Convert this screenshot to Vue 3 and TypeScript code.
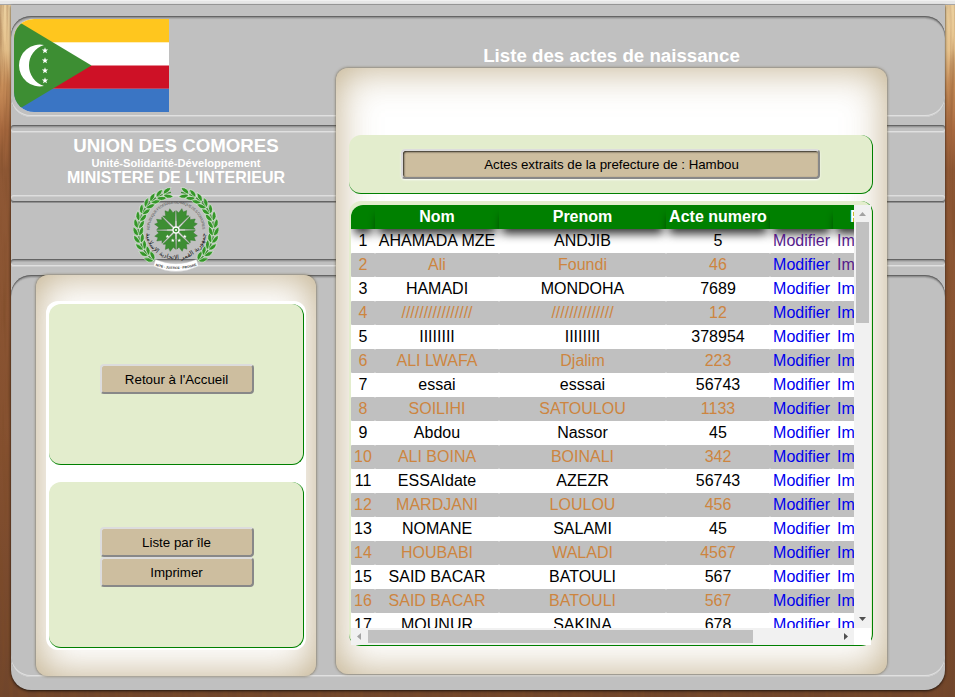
<script setup lang="ts">
interface Acte {
  nom: string
  prenom: string
  numero: string
  modifierVisited?: boolean
  imprimerVisited?: boolean
}

const actes: Acte[] = [
  { nom: 'AHAMADA MZE', prenom: 'ANDJIB', numero: '5', modifierVisited: true, imprimerVisited: true },
  { nom: 'Ali', prenom: 'Foundi', numero: '46', imprimerVisited: true },
  { nom: 'HAMADI', prenom: 'MONDOHA', numero: '7689' },
  { nom: '////////////////', prenom: '//////////////', numero: '12' },
  { nom: 'IIIIIIII', prenom: 'IIIIIIII', numero: '378954' },
  { nom: 'ALI LWAFA', prenom: 'Djalim', numero: '223' },
  { nom: 'essai', prenom: 'esssai', numero: '56743' },
  { nom: 'SOILIHI', prenom: 'SATOULOU', numero: '1133' },
  { nom: 'Abdou', prenom: 'Nassor', numero: '45' },
  { nom: 'ALI BOINA', prenom: 'BOINALI', numero: '342' },
  { nom: 'ESSAIdate', prenom: 'AZEZR', numero: '56743' },
  { nom: 'MARDJANI', prenom: 'LOULOU', numero: '456' },
  { nom: 'NOMANE', prenom: 'SALAMI', numero: '45' },
  { nom: 'HOUBABI', prenom: 'WALADI', numero: '4567' },
  { nom: 'SAID BACAR', prenom: 'BATOULI', numero: '567' },
  { nom: 'SAID BACAR', prenom: 'BATOULI', numero: '567' },
  { nom: 'MOUNUR', prenom: 'SAKINA', numero: '678' },
]

const starPoints = (cx: number, cy: number, outer: number): string =>
  Array.from({ length: 10 }, (_, i) => {
    const r = i % 2 ? outer * 0.42 : outer
    const a = (Math.PI / 5) * i - Math.PI / 2
    return `${(cx + r * Math.cos(a)).toFixed(2)},${(cy + r * Math.sin(a)).toFixed(2)}`
  }).join(' ')

const flagStars = [31.5, 41.5, 51.5, 61.5].map((y) => starPoints(31, y, 3.3))
const emblemStars = [
  starPoints(34.5, 49.5, 2),
  starPoints(39.8, 53.4, 2),
  starPoints(46.2, 53.4, 2),
  starPoints(51.8, 49.5, 2),
]

const leaves = Array.from({ length: 12 }, (_, i) => {
  const angle = 139 - i * 11.3
  const rad = (angle * Math.PI) / 180
  return { x: 37.6 * Math.sin(rad), y: -37.6 * Math.cos(rad), rot: angle - 90 }
})
const petals = [22, 67, 112, 157, 202, 247, 292, 337]
const spokes = [0, 45, 90, 135, 180, 225, 270, 315]
</script>

<template>
  <div class="page">
    <div class="chrome-edge"></div>
    <svg class="wood" width="955" height="692" aria-hidden="true">
      <filter id="grain" x="0" y="0" width="100%" height="100%">
        <feTurbulence type="fractalNoise" baseFrequency="0.22 0.012" numOctaves="3" seed="4" />
        <feColorMatrix values="0 0 0 0 0.2  0 0 0 0 0.07  0 0 0 0 0.02  1.1 0 0 0 -0.42" />
      </filter>
      <rect width="955" height="692" filter="url(#grain)" />
    </svg>
    <div class="sheet">
      <div class="backdrop">
        <div class="band band-top"></div>
        <div class="rule rule-down rule-a"></div>
        <div class="rule rule-up rule-b"></div>
        <div class="rule rule-down rule-c"></div>
        <div class="band band-main"></div>
      </div>
      <div class="content">
        <aside class="side">
          <svg class="flag" viewBox="0 0 155 93" width="155" height="93">
            <rect width="155" height="93" fill="#fff" />
            <rect width="155" height="23.3" fill="#ffc61e" />
            <rect y="46.5" width="155" height="23.3" fill="#ce1126" />
            <rect y="69.8" width="155" height="23.2" fill="#3a75c4" />
            <path d="M0 0 L77.5 46.5 L0 93Z" fill="#3d8e33" />
            <path d="M30 26A20.9 20.9 0 1 0 30 67A21.5 21.5 0 0 1 30 26Z" fill="#fff" />
            <polygon v-for="(p, i) in flagStars" :key="i" :points="p" fill="#fff" />
          </svg>
          <div class="titles">
            <div class="country">UNION DES COMORES</div>
            <div class="motto">Unité-Solidarité-Développement</div>
            <div class="ministry">MINISTERE DE L'INTERIEUR</div>
          </div>
          <svg class="emblem" viewBox="0 0 86 86" width="86" height="86">
            <defs>
              <path id="arcTop" d="M16.5 43A26.5 26.5 0 0 1 69.5 43" />
              <path id="arcBottom" d="M13 45A30 27.5 0 0 0 73 45" />
              <path id="arcRibbon" d="M22 78.5Q43 85.5 64 78.5" />
            </defs>
            <g v-for="side in [1, -1]" :key="side" :transform="`translate(43 43) scale(${side} 1)`">
              <path d="M21.8 31A38 38 0 0 0 5 -37.6" fill="none" stroke="#3d8e33" stroke-width="1.2" />
              <g v-for="(l, i) in leaves" :key="i" :transform="`translate(${l.x} ${l.y}) rotate(${l.rot})`">
                <path
                  d="M0 3.5Q-6.8 1.8 -4.8 -6Q-0.3 -3.4 0 3.5ZM0 3.5Q6.8 1.8 4.8 -6Q0.3 -3.4 0 3.5Z"
                  fill="#349628"
                  stroke="#f2f8f0"
                  stroke-width=".5"
                />
              </g>
            </g>
            <g transform="translate(43 43)">
              <path
                v-for="a in petals"
                :key="a"
                :transform="`rotate(${a})`"
                d="M0 -3L-6.8 -18L-4 -17L-2.6 -22L0 -19.5L2.6 -22L4 -17L6.8 -18Z"
                fill="#3d8e33"
                stroke="#2f7529"
                stroke-width=".4"
              />
              <path v-for="a in spokes" :key="'s' + a" :transform="`rotate(${a})`" d="M0 -3V-9" stroke="#dcebd8" stroke-width=".8" />
              <circle r="3" fill="#3d8e33" stroke="#fff" stroke-width="1.3" />
              <circle r="1" fill="#fff" />
            </g>
            <polygon v-for="(p, i) in emblemStars" :key="i" :points="p" fill="#fff" />
            <text class="em-latin"><textPath href="#arcTop" textLength="82">REPUBLIQUE FEDERALE ISLAMIQUE DES COMORES</textPath></text>
            <text class="em-arabic" text-anchor="middle"><textPath href="#arcBottom" startOffset="50%">جمهورية القمر الاتحادية الإسلامية</textPath></text>
            <path d="M22.5 72.5Q43 81 63.5 72.5L65.5 79Q43 90 20.5 79Z" fill="#fff" stroke="#c9c9c9" stroke-width=".4" />
            <text class="em-ribbon" text-anchor="middle"><textPath href="#arcRibbon" startOffset="50%">UNITÉ - JUSTICE - PROGRÈS</textPath></text>
          </svg>
          <nav class="panel side-panel">
            <div class="side-inner">
              <div class="card card-home">
                <button type="button" class="btn">Retour à l'Accueil</button>
              </div>
              <div class="card card-actions">
                <button type="button" class="btn">Liste par île</button>
                <button type="button" class="btn">Imprimer</button>
              </div>
            </div>
          </nav>
        </aside>
        <main class="main">
          <h1>Liste des actes de naissance</h1>
          <section class="panel main-panel">
            <div class="card filter-card">
              <button type="button" class="btn btn-wide">Actes extraits de la prefecture de : Hambou</button>
            </div>
            <div class="card list-card">
              <div class="scroller">
                <div class="viewport">
                  <table>
                    <colgroup>
                      <col class="c1" /><col class="c2" /><col class="c3" /><col class="c4" /><col class="c5" /><col class="c6" />
                    </colgroup>
                    <thead>
                      <tr><th></th><th>Nom</th><th>Prenom</th><th>Acte numero</th><th></th><th class="last">F</th></tr>
                    </thead>
                    <tbody>
                      <tr v-for="(a, i) in actes" :key="i">
                        <td>{{ i + 1 }}</td>
                        <td>{{ a.nom }}</td>
                        <td>{{ a.prenom }}</td>
                        <td>{{ a.numero }}</td>
                        <td><a :class="{ visited: a.modifierVisited }">Modifier</a></td>
                        <td class="print"><a :class="{ visited: a.imprimerVisited }">Imprimer</a></td>
                      </tr>
                    </tbody>
                  </table>
                </div>
                <div class="vbar">
                  <svg width="17" height="17"><path d="M5 11L8.5 7L12 11Z" fill="#a3a3a3" /></svg>
                  <div class="vthumb"></div>
                  <svg class="end" width="17" height="17"><path d="M5 6L8.5 10L12 6Z" fill="#505050" /></svg>
                </div>
                <div class="hbar">
                  <svg width="17" height="17"><path d="M10 5L6 8.5L10 12Z" fill="#a3a3a3" /></svg>
                  <div class="hthumb"></div>
                  <svg class="end" width="17" height="17"><path d="M7 5L11 8.5L7 12Z" fill="#505050" /></svg>
                </div>
                <div class="corner"></div>
              </div>
            </div>
          </section>
        </main>
      </div>
    </div>
  </div>
</template>

<style>
body {
  margin: 0;
  overflow: hidden;
}
</style>

<style scoped>
* {
  box-sizing: border-box;
}
.page {
  width: 955px;
  height: 697px;
  overflow: hidden;
  display: grid;
  grid-template: 5px 692px / 955px;
  font-family: 'Liberation Sans', Arial, sans-serif;
  background:
    linear-gradient(to bottom, #ecd2a2 0, #e6c28c 50px, #c98f5a 85px, #a8693f 130px, #8f5835 170px, #85502f 450px, #70452b 697px);
}
.chrome-edge {
  background: #e6e6e6;
  border-top: 1px solid #f1f1f1;
  border-bottom: 1px solid #a6a6a6;
}
.wood {
  grid-area: 2 / 1;
  display: block;
}
.sheet {
  grid-area: 2 / 1;
  position: relative;
  display: grid;
  width: 934px;
  height: 685px;
  margin-left: 11px;
  background: #c0c0c0;
  border-radius: 0 0 20px 20px;
  box-shadow: 0 1px 3px rgba(0, 0, 0, 0.75);
}
.backdrop,
.content {
  grid-area: 1 / 1;
}
.backdrop {
  display: flex;
  flex-direction: column;
}
.band {
  border-radius: 20px;
  box-shadow:
    inset 0 1px 0 #646464,
    inset 0 2px 0 #919191,
    inset 0 3px 1px rgba(0, 0, 0, 0.12),
    inset 0 -1px 0 #cecece,
    inset 0 -2px 0 #e0e0e0,
    inset 0 0 1px rgba(0, 0, 0, 0.3);
}
.band-top {
  height: 101px;
  margin-top: 11px;
}
.band-main {
  height: 402px;
  margin-top: 8px;
}
.rule {
  height: 8px;
  border-radius: 3px;
}
.rule-down {
  box-shadow:
    inset 0 1px 0 #646464,
    inset 0 2px 0 #959595,
    inset 0 3px 1px rgba(0, 0, 0, 0.1),
    inset 0 -1px 0 #cecece,
    inset 0 -2px 0 #e0e0e0;
}
.rule-up {
  box-shadow:
    inset 0 1px 0 #dedede,
    inset 0 2px 0 #cecece,
    inset 0 -1px 0 #919191,
    inset 0 -2px 0 #646464;
}
.rule-a {
  margin-top: 8px;
}
.rule-b {
  margin-top: 62px;
}
.rule-c {
  margin-top: 56px;
}
.content {
  display: grid;
  grid-template-columns: 325px 551px;
  align-items: start;
}
.side {
  display: flex;
  flex-direction: column;
  padding-top: 14px;
}
.flag {
  display: block;
  margin-left: 3px;
  border-radius: 20px 0 0 20px;
}
.titles {
  width: 330px;
  height: 75px;
  padding-top: 24px;
  color: #fff;
  font-weight: bold;
  text-align: center;
  white-space: nowrap;
}
.country {
  font-size: 18.7px;
  line-height: 20px;
}
.motto {
  font-size: 11.15px;
  line-height: 13px;
  margin-top: 1px;
}
.ministry {
  font-size: 16px;
  line-height: 16px;
}
.emblem {
  display: block;
  margin-left: 122px;
}
.em-latin {
  font-size: 3.7px;
  fill: #555;
}
.em-arabic {
  font-family: 'DejaVu Sans', sans-serif;
  font-size: 6.4px;
  fill: #222;
}
.em-ribbon {
  font-size: 3.3px;
  fill: #333;
  font-weight: bold;
}
.panel {
  background: #fff;
  border-radius: 12px;
  box-shadow: inset 0 0 40px rgba(150, 120, 60, 0.62), 0 0 3px rgba(80, 65, 30, 0.8);
}
.side-panel {
  width: 280px;
  height: 401px;
  margin: 2px 0 0 25px;
  padding: 26px 10px;
}
.side-inner {
  height: 349px;
  padding: 3px 2px 3px 3px;
  background: #fff;
  border-radius: 12px;
  display: flex;
  flex-direction: column;
  gap: 17px;
}
.card {
  background: #e3edcd;
  border-radius: 12px;
  border-right: 1px solid #008000;
  border-bottom: 1px solid #008000;
}
.side-inner .card {
  display: flex;
  flex-direction: column;
  align-items: flex-start;
  flex-shrink: 0;
  padding-left: 51px;
}
.card-home {
  height: 161px;
  padding-top: 60px;
}
.card-actions {
  height: 166px;
  padding-top: 45px;
}
.btn {
  width: 154px;
  height: 30px;
  padding: 0 1px 0 0;
  font: 13.33px 'Liberation Sans', Arial, sans-serif;
  color: #000;
  background: #cdbe9f;
  border: 2px solid;
  border-color: #dcdcdc #888 #888 #dcdcdc;
  border-radius: 4px;
  white-space: nowrap;
}
.card-actions .btn {
  padding-top: 1px;
}
.main {
  padding-top: 40px;
}
h1 {
  margin: 0;
  height: 23px;
  line-height: 22px;
  font-size: 18.7px;
  color: #fff;
  text-align: center;
}
.main-panel {
  width: 551px;
  height: 606px;
  padding: 67px 14px 0 13px;
}
.filter-card {
  height: 59px;
  padding: 14px 0 0 52px;
}
.btn-wide {
  display: block;
  width: 419px;
  padding: 0 0 0 2px;
  letter-spacing: -0.04px;
  box-shadow: inset 1px 1px 2px rgba(0, 0, 0, 0.8), 0 1px 2px rgba(255, 255, 255, 0.9);
}
.list-card {
  height: 445px;
  margin-top: 7px;
  padding: 4px 0 0 2px;
}
.scroller {
  width: 520px;
  height: 440px;
  display: grid;
  grid-template: 423px 17px / 503px 17px;
}
.viewport {
  overflow: hidden;
  border-top-left-radius: 12px;
  background: #fff;
}
table {
  width: 557px;
  table-layout: fixed;
  border-collapse: separate;
  border-spacing: 0;
  font-size: 16px;
  text-align: center;
  white-space: nowrap;
}
.c1 { width: 24px; }
.c2 { width: 124px; }
.c3 { width: 167px; }
.c4 { width: 104px; }
.c5 { width: 63px; }
.c6 { width: 75px; }
th,
td {
  height: 24px;
  padding: 0;
  line-height: 22px;
}
th {
  background: #008000;
  color: #fff;
  box-shadow: 0 8px 10px -3px rgba(0, 0, 0, 0.8);
}
.last {
  text-align: left;
  padding-left: 17px;
}
td {
  border-radius: 1px;
}
.print {
  text-align: left;
  padding-left: 4px;
}
tbody tr:nth-child(even) td {
  background: #c0c0c0;
  color: #cd853f;
}
tbody a {
  color: #0000ee;
}
tbody a.visited {
  color: #551a8b;
}
.vbar {
  background: #f1f1f1;
  display: flex;
  flex-direction: column;
}
.vbar svg,
.hbar svg {
  display: block;
}
.vthumb {
  width: 13px;
  height: 101px;
  margin-left: 2px;
  background: #c1c1c1;
}
.vbar .end {
  margin-top: auto;
}
.hbar {
  background: #f1f1f1;
  display: flex;
  align-items: flex-start;
}
.hthumb {
  width: 385px;
  height: 13px;
  margin-top: 2px;
  background: #c1c1c1;
}
.hbar .end {
  margin-left: auto;
}
.corner {
  background: #fff;
}
</style>
